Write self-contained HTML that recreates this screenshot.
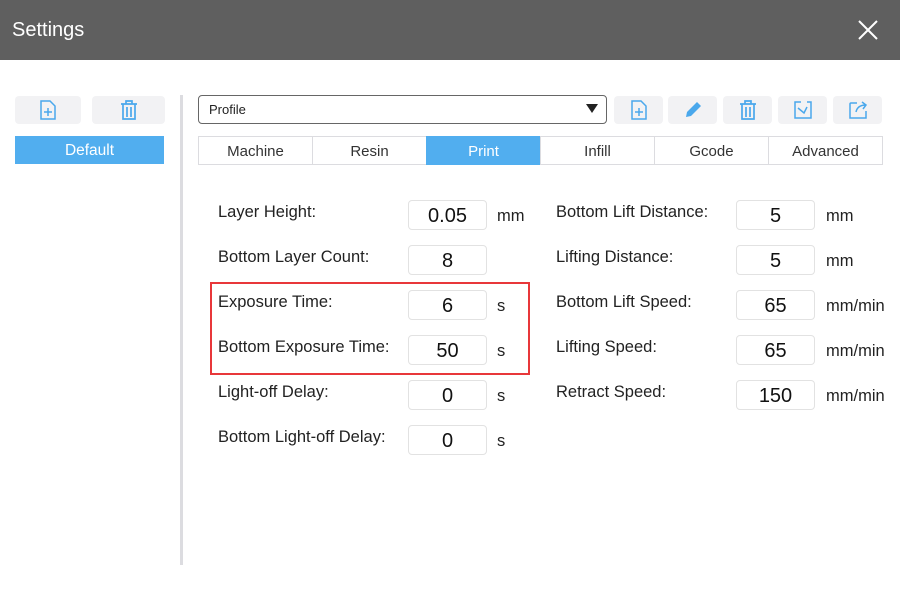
<!DOCTYPE html><html><head><style>
body{margin:0;width:900px;height:600px;background:#fff;font-family:"Liberation Sans",sans-serif;position:relative;overflow:hidden;color:#222}
.a{position:absolute}
.hdr{left:0;top:0;width:900px;height:60px;background:#5f5f5f;color:#fff;font-size:20px}
.btn{background:#f2f2f4;border-radius:4px;height:28px;top:96px;display:flex;align-items:center;justify-content:center}
.tab{top:136px;height:29px;border:1px solid #dcdce0;box-sizing:border-box;width:115px;text-align:center;line-height:29px;font-size:15px;color:#333}
.lab{font-size:16.5px;color:#222}
.in{width:79px;height:30px;border:1px solid #e2e2e2;border-radius:4px;box-sizing:border-box;text-align:center;line-height:30px;font-size:20px;color:#111}
.u{font-size:16.5px}
</style></head><body>
<div class="a hdr"><span class="a" style="left:12px;top:19px">Settings</span>
<svg class="a" style="left:857px;top:19px" width="22" height="22"><path d="M2 2L20 20M20 2L2 20" stroke="#fff" stroke-width="2"/></svg></div>
<div class="a btn" style="left:15px;width:66px"><svg width="18" height="20"><path d="M2 1h9l5 5v13H2z" fill="none" stroke="#4aa8ec" stroke-width="1.5"/><path d="M9 8v8M5 12h8" stroke="#4aa8ec" stroke-width="1.5"/></svg></div>
<div class="a btn" style="left:92px;width:73px"><svg width="18" height="20"><path d="M1 4h16M6 4V1h6v3M3 4v15h12V4M7 7v10M11 7v10" fill="none" stroke="#4aa8ec" stroke-width="1.7"/></svg></div>
<div class="a" style="left:15px;top:136px;width:149px;height:28px;background:#51aeef;color:#fff;text-align:center;line-height:30px;font-size:15.5px">Default</div>
<div class="a" style="left:180px;top:95px;width:3px;height:470px;background:#dcdce0"></div>
<div class="a" style="left:198px;top:95px;width:409px;height:29px;border:1px solid #666;border-radius:4px;box-sizing:border-box;font-size:13px;line-height:27px;padding-left:10px">Profile<span class="a" style="right:8px;top:8px;width:0;height:0;border-left:6px solid transparent;border-right:6px solid transparent;border-top:9px solid #222"></span></div>
<div class="a btn" style="left:614px;width:49px"><svg width="18" height="20"><path d="M2 1h9l5 5v13H2z" fill="none" stroke="#4aa8ec" stroke-width="1.5"/><path d="M9 8v8M5 12h8" stroke="#4aa8ec" stroke-width="1.5"/></svg></div>
<div class="a btn" style="left:668px;width:49px"><svg width="20" height="20"><path d="M3 17l1-5 10-10 4 4-10 10z" fill="#4aa8ec"/></svg></div>
<div class="a btn" style="left:723px;width:49px"><svg width="18" height="20"><path d="M1 4h16M6 4V1h6v3M3 4v15h12V4M7 7v10M11 7v10" fill="none" stroke="#4aa8ec" stroke-width="1.7"/></svg></div>
<div class="a btn" style="left:778px;width:49px"><svg width="20" height="20"><path d="M8 2H2v16h16v-16h-4M5 8l6 5 3-6" fill="none" stroke="#4aa8ec" stroke-width="1.5"/></svg></div>
<div class="a btn" style="left:833px;width:49px"><svg width="20" height="20"><path d="M9 3H3a1 1 0 0 0-1 1v14h16v-7M8 12c1-5 5-7 10-7M14 2l4 3-3 4" fill="none" stroke="#4aa8ec" stroke-width="1.5"/></svg></div>
<div class="a tab" style="left:198px">Machine</div>
<div class="a tab" style="left:312px">Resin</div>
<div class="a tab" style="left:426px;background:#51aeef;color:#fff;border-color:#51aeef">Print</div>
<div class="a tab" style="left:540px">Infill</div>
<div class="a tab" style="left:654px">Gcode</div>
<div class="a tab" style="left:768px">Advanced</div>

<div class="a lab" style="left:218px;top:203px">Layer Height:</div><div class="a in" style="left:408px;top:200px">0.05</div><div class="a u" style="left:497px;top:207px">mm</div>
<div class="a lab" style="left:218px;top:248px">Bottom Layer Count:</div><div class="a in" style="left:408px;top:245px">8</div>
<div class="a lab" style="left:218px;top:293px">Exposure Time:</div><div class="a in" style="left:408px;top:290px">6</div><div class="a u" style="left:497px;top:297px">s</div>
<div class="a lab" style="left:218px;top:338px">Bottom Exposure Time:</div><div class="a in" style="left:408px;top:335px">50</div><div class="a u" style="left:497px;top:342px">s</div>
<div class="a lab" style="left:218px;top:383px">Light-off Delay:</div><div class="a in" style="left:408px;top:380px">0</div><div class="a u" style="left:497px;top:387px">s</div>
<div class="a lab" style="left:218px;top:428px">Bottom Light-off Delay:</div><div class="a in" style="left:408px;top:425px">0</div><div class="a u" style="left:497px;top:432px">s</div>
<div class="a" style="left:210px;top:282px;width:320px;height:93px;border:2px solid #e8373a;box-sizing:border-box"></div>

<div class="a lab" style="left:556px;top:203px">Bottom Lift Distance:</div><div class="a in" style="left:736px;top:200px">5</div><div class="a u" style="left:826px;top:207px">mm</div>
<div class="a lab" style="left:556px;top:248px">Lifting Distance:</div><div class="a in" style="left:736px;top:245px">5</div><div class="a u" style="left:826px;top:252px">mm</div>
<div class="a lab" style="left:556px;top:293px">Bottom Lift Speed:</div><div class="a in" style="left:736px;top:290px">65</div><div class="a u" style="left:826px;top:297px">mm/min</div>
<div class="a lab" style="left:556px;top:338px">Lifting Speed:</div><div class="a in" style="left:736px;top:335px">65</div><div class="a u" style="left:826px;top:342px">mm/min</div>
<div class="a lab" style="left:556px;top:383px">Retract Speed:</div><div class="a in" style="left:736px;top:380px">150</div><div class="a u" style="left:826px;top:387px">mm/min</div>
</body></html>
